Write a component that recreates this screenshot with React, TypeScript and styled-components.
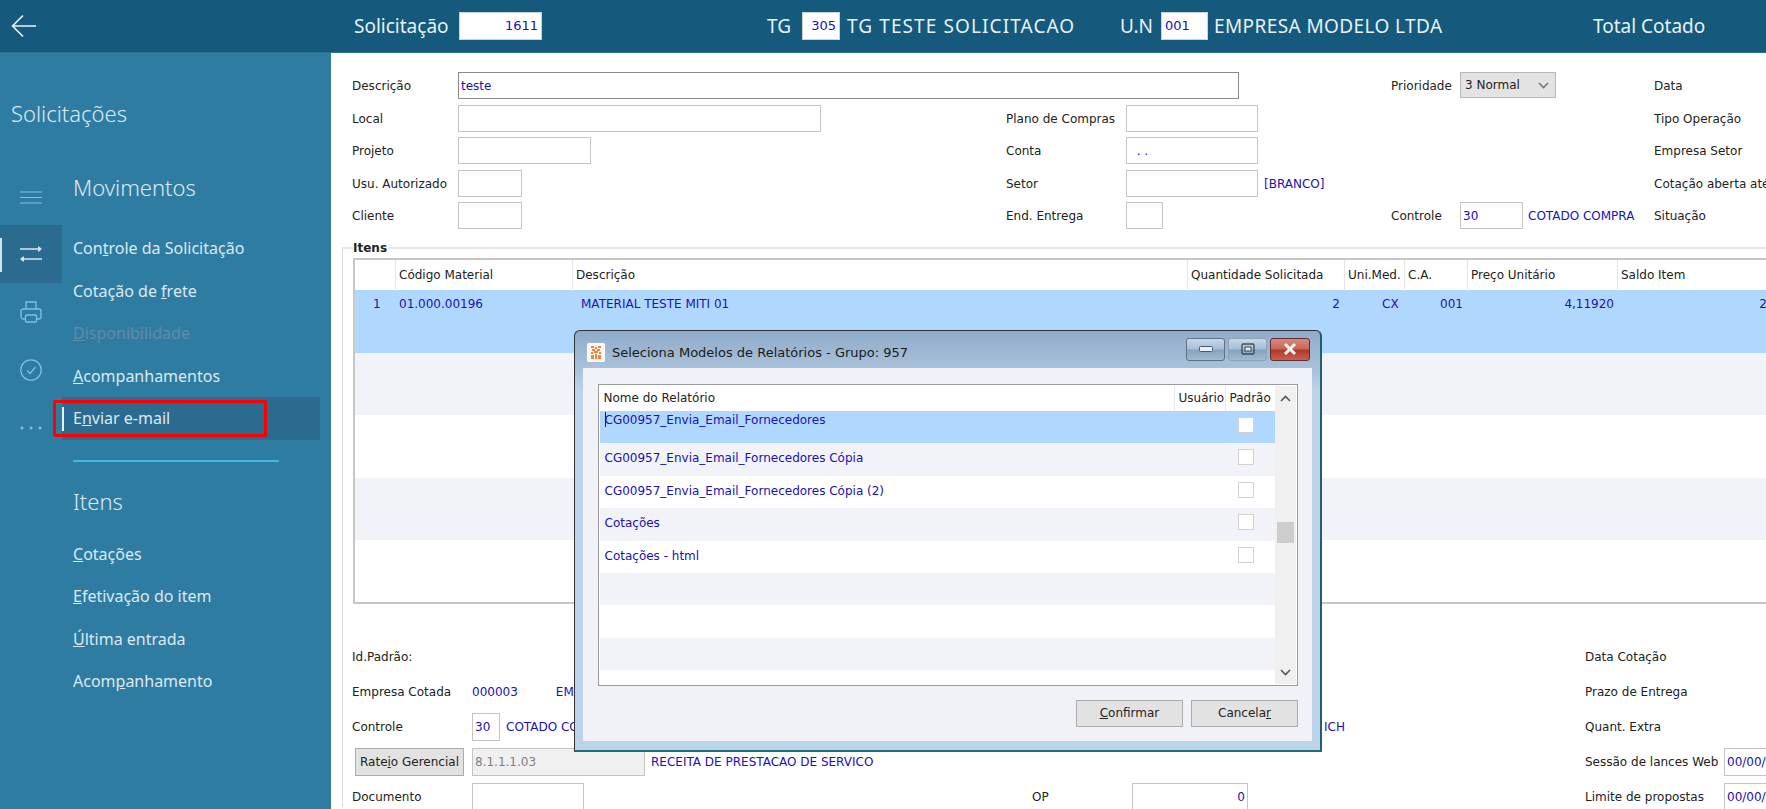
import React from "react";
import styled, { createGlobalStyle, css } from "styled-components";

const Global = createGlobalStyle`
  html, body { margin: 0; padding: 0; background: #fff; }
  #root { width: 1766px; height: 809px; overflow: hidden; }
  * { box-sizing: border-box; }
`;

const WIN = `"DejaVu Sans", "Liberation Sans", sans-serif`;
const UI = `"Noto Sans", "Open Sans", sans-serif`;
const BLUE = "#2010b4";
const TEXT = "#222";

const Page = styled.div`
  width: 1766px;
  height: 809px;
  position: relative;
  overflow: hidden;
  font-family: ${WIN};
  font-size: 12px;
  color: ${TEXT};
`;

const Header = styled.header`
  height: 53px;
  background: #155a7c;
  border-bottom: 1px solid #2c7396;
  display: flex;
  align-items: center;
  color: #e8f1f5;
  font-family: ${UI};
  font-size: 19px;
  white-space: nowrap;
`;
const BackCell = styled.div`
  width: 354px;
  padding-left: 11px;
  display: flex;
  align-items: center;
`;
const HeadSlot = styled.div<{ $w: number; $ls?: number }>`
  width: ${(p) => p.$w}px;
  flex: none;
  display: flex;
  align-items: center;
  letter-spacing: ${(p) => p.$ls ?? 0}px;
`;
const HeadInput = styled.div<{ $w: number; $right?: boolean }>`
  width: ${(p) => p.$w}px;
  height: 28px;
  background: #fff;
  border: 1px solid #c8d4da;
  color: ${BLUE};
  font-family: ${WIN};
  font-size: 13px;
  line-height: 26px;
  padding: 0 3px;
  text-align: ${(p) => (p.$right ? "right" : "left")};
`;

const Body = styled.div`
  display: grid;
  grid-template-columns: 331px 1fr;
  height: 756px;
`;

const Sidebar = styled.aside`
  background: #2f7ca3;
  color: #dce9f0;
  font-family: ${UI};
  position: relative;
`;
const SideTitle = styled.div`
  font-size: 22px;
  font-weight: 300;
  line-height: 30px;
  padding: 45px 0 0 11px;
  height: 117px;
`;
const SideColumns = styled.div`
  display: grid;
  grid-template-columns: 62px 1fr;
`;
const Rail = styled.nav`
  display: flex;
  flex-direction: column;
`;
const RailItem = styled.div<{ $h?: number; $active?: boolean }>`
  height: ${(p) => p.$h ?? 58}px;
  display: flex;
  align-items: center;
  justify-content: center;
  position: relative;
  color: #7cc0ea;
  ${(p) =>
    p.$active &&
    css`
      background: #2b6b8f;
      color: #e6f0f5;
      &::before {
        content: "";
        position: absolute;
        left: 0;
        top: 13px;
        width: 2px;
        height: 34px;
        background: #d5e2e9;
      }
    `}
`;
const Menu = styled.div``;
const MenuHeading = styled.div<{ $mt?: number; $mb?: number }>`
  font-size: 22px;
  font-weight: 300;
  line-height: 34px;
  height: 36px;
  padding-left: 11px;
  margin-top: ${(p) => p.$mt ?? 0}px;
  margin-bottom: ${(p) => p.$mb ?? 21}px;
`;
const MenuItem = styled.div<{ $active?: boolean; $disabled?: boolean }>`
  height: 42.5px;
  line-height: 42px;
  font-size: 16px;
  padding-left: 11px;
  width: 258px;
  position: relative;
  color: ${(p) => (p.$disabled ? "#5f8ca8" : "#dce9f0")};
  ${(p) =>
    p.$active &&
    css`
      background: #2b6b8f;
      &::before {
        content: "";
        position: absolute;
        left: 0;
        top: 10px;
        width: 2px;
        height: 24px;
        background: #e6f0f5;
      }
    `}
`;
const Divider = styled.div`
  height: 2px;
  width: 206px;
  margin: 20px 0 0 11px;
  background: #3db9e4;
`;
const RedFrame = styled.div`
  position: absolute;
  left: 53px;
  top: 347px;
  width: 214px;
  height: 37px;
  border: 3px solid #f00;
  border-radius: 2px;
`;

const Main = styled.main`
  position: relative;
  padding: 19px 0 0 21px;
  background: #fff;
  min-width: 0;
`;
const FormRow = styled.div`
  display: grid;
  grid-template-columns: 106px 548px 120px 265px 69px 194px 1fr;
  height: 32.5px;
  align-items: start;
  white-space: nowrap;
`;
const Label = styled.div`
  line-height: 28px;
  height: 27px;
`;
const Link = styled.span<{ $ml?: number }>`
  color: ${BLUE};
  line-height: 28px;
  margin-left: ${(p) => p.$ml ?? 0}px;
`;
const Inline = styled.div`
  display: flex;
  align-items: flex-start;
  white-space: nowrap;
`;
const Input = styled.div<{ $w: number; $dark?: boolean; $right?: boolean; $disabled?: boolean; $h?: number }>`
  width: ${(p) => p.$w}px;
  height: ${(p) => p.$h ?? 27}px;
  flex: none;
  background: ${(p) => (p.$disabled ? "#f0f0f0" : "#fff")};
  border: 1px solid ${(p) => (p.$dark ? "#8a8a8a" : "#c4c4c4")};
  color: ${(p) => (p.$disabled ? "#808080" : BLUE)};
  line-height: 26px;
  padding: 0 2px;
  white-space: nowrap;
  overflow: hidden;
  text-align: ${(p) => (p.$right ? "right" : "left")};
`;
const WideInput = styled(Input)`
  grid-column: span 3;
`;
const Select = styled.div`
  width: 96px;
  height: 26px;
  background: #e3e3e3;
  border: 1px solid #b8b8b8;
  line-height: 24px;
  padding-left: 4px;
  display: flex;
  justify-content: space-between;
  align-items: center;
`;
const SelectArrow = styled.span`
  margin-right: 6px;
  display: flex;
`;

const GroupBox = styled.section`
  position: relative;
  margin: 12.5px 0 0 -10px;
  border-top: 2px solid #e8e8e8;
  border-left: 1px solid #dcdcdc;
  padding: 9px 0 0 10px;
  height: 560px;
`;
const Legend = styled.div`
  position: absolute;
  left: 10px;
  top: -9px;
  background: #fff;
  padding-right: 2px;
  font-weight: 700;
  line-height: 16px;
`;
const Table = styled.div`
  width: 1500px;
  height: 346px;
  border: 2px solid #c6c6c6;
  border-right: none;
  overflow: hidden;
`;
const COLS = "41px 177px 615px 157px 60px 63px 150px 149px";
const HeadRow = styled.div`
  display: grid;
  grid-template-columns: ${COLS};
  height: 30px;
  background: #fff;
`;
const HeadCell = styled.div`
  border-right: 1px solid #e4e4e4;
  line-height: 31px;
  padding-left: 3px;
  white-space: nowrap;
`;
const DataRow = styled.div<{ $tone: "sel" | "alt" | "plain" }>`
  display: grid;
  grid-template-columns: ${COLS};
  height: 62.5px;
  background: ${(p) => (p.$tone === "sel" ? "#b0d8ff" : p.$tone === "alt" ? "#f2f3f8" : "#fff")};
  color: ${BLUE};
`;
const DataCell = styled.div<{ $right?: boolean; $pl?: number; $pr?: number }>`
  line-height: 29px;
  text-align: ${(p) => (p.$right ? "right" : "left")};
  padding-left: ${(p) => p.$pl ?? 0}px;
  padding-right: ${(p) => p.$pr ?? 0}px;
  white-space: nowrap;
`;
const BottomRow = styled.div<{ $mt?: number }>`
  display: grid;
  grid-template-columns: 120px 560px 100px 453px 139px 1fr;
  height: 35px;
  align-items: center;
  white-space: nowrap;
  margin: ${(p) => p.$mt ?? 0}px 0 0 -1px;
`;
const Button = styled.div<{ $w: number; $h?: number }>`
  width: ${(p) => p.$w}px;
  height: ${(p) => p.$h ?? 27}px;
  flex: none;
  background: #e2e2e2;
  border: 1px solid #acacac;
  text-align: center;
  line-height: ${(p) => (p.$h ?? 27) - 2}px;
  color: #222;
`;
const RateioButton = styled(Button)`
  margin-left: 3px;
`;
const Clip = styled.span<{ $w: number; $ml: number }>`
  display: inline-block;
  width: ${(p) => p.$w}px;
  margin-left: ${(p) => p.$ml}px;
  overflow: hidden;
  color: ${BLUE};
  line-height: 28px;
  white-space: nowrap;
`;

const Dialog = styled.div`
  position: absolute;
  left: 574px;
  top: 330px;
  width: 748px;
  height: 422px;
  border: 1px solid #2e3338;
  border-bottom: 2px solid #1f6f7f;
  border-right: 2px solid #1f5f6f;
  border-radius: 6px 6px 0 0;
  background: linear-gradient(#90abc9 0, #aac3dd 40px, #bcd4ea 60px, #bcd4ea 100%);
  display: flex;
  flex-direction: column;
  padding: 0 8px 9px;
`;
const TitleBar = styled.div`
  height: 38px;
  display: flex;
  align-items: center;
  font-size: 13px;
  color: #1a1a1a;
  padding: 6px 0 0 4px;
`;
const TitleText = styled.div`
  margin-left: 7px;
  flex: 1;
`;
const WinButton = styled.div<{ $kind: "min" | "max" | "close" }>`
  width: ${(p) => (p.$kind === "close" ? 40 : 39)}px;
  height: 23px;
  margin-left: ${(p) => (p.$kind === "min" ? 0 : 3)}px;
  margin-right: ${(p) => (p.$kind === "close" ? 2 : 0)}px;
  margin-top: -7px;
  border-radius: 3px;
  border: 1px solid ${(p) => (p.$kind === "close" ? "#5e2f35" : p.$kind === "min" ? "#5f7387" : "#8da3b8")};
  background: ${(p) =>
    p.$kind === "close"
      ? "linear-gradient(#d98a7c 0, #c9675a 45%, #b23a2b 55%, #c9614f 100%)"
      : "linear-gradient(#c6d8e9 0, #a9c0d8 45%, #86a3bf 55%, #9fbad3 100%)"};
  display: flex;
  align-items: center;
  justify-content: center;
`;
const Client = styled.div`
  flex: 1;
  background: #f1f2f8;
  padding: 16px 14px 14px 14.5px;
  display: flex;
  flex-direction: column;
`;
const List = styled.div`
  height: 302px;
  flex: none;
  border: 1px solid #9b9b9b;
  background: #fff;
  display: grid;
  grid-template-columns: 1fr 21px;
  padding: 1px;
  overflow: hidden;
`;
const LCOLS = "575px 51px 50px";
const ListPane = styled.div`
  min-width: 0;
  overflow: hidden;
`;
const ListHead = styled.div`
  display: grid;
  grid-template-columns: ${LCOLS};
  height: 25px;
  line-height: 25px;
`;
const ListHeadCell = styled.div<{ $last?: boolean }>`
  padding-left: 4px;
  border-right: 1px solid ${(p) => (p.$last ? "transparent" : "#e8e8e8")};
  white-space: nowrap;
`;
const ListRow = styled.div<{ $tone: "sel" | "alt" | "plain" }>`
  display: grid;
  grid-template-columns: 621px 50px;
  height: 32.4px;
  padding-top: 6px;
  background: ${(p) => (p.$tone === "sel" ? "#b0d8ff" : p.$tone === "alt" ? "#f2f3f8" : "#fff")};
  align-items: start;
  color: ${BLUE};
`;
const ListName = styled.div<{ $raised?: boolean }>`
  padding-left: 5px;
  position: relative;
  white-space: nowrap;
  line-height: 18px;
  ${(p) =>
    p.$raised &&
    css`
      margin-top: -6px;
      &::before {
        content: "";
        position: absolute;
        left: 5px;
        top: 1px;
        width: 1px;
        height: 15px;
        background: #222;
      }
    `}
`;
const CheckBox = styled.div`
  width: 16px;
  height: 16px;
  background: #fff;
  border: 1px solid #d2d2d2;
  justify-self: center;
`;
const ScrollBar = styled.div`
  background: #f0f0f0;
  position: relative;
  display: flex;
  flex-direction: column;
  align-items: center;
  justify-content: space-between;
  padding: 9px 0 8px;
`;
const ScrollThumb = styled.div`
  position: absolute;
  left: 2px;
  top: 136px;
  width: 17px;
  height: 21px;
  background: #cdcdcd;
`;
const DialogActions = styled.div`
  display: flex;
  justify-content: flex-end;
  gap: 8px;
  margin-top: 14px;
`;

const Back = () => (
  <svg width="26" height="24" viewBox="0 0 26 24" fill="none" stroke="#eef4f7" strokeWidth="1.6">
    <path d="M25 12H2M12 1.5 1.5 12 12 22.5" />
  </svg>
);
const Hamburger = () => (
  <svg width="22" height="13" viewBox="0 0 22 13" stroke="currentColor" strokeWidth="1.2">
    <path d="M0 1h22M0 6.5h22M0 12h22" />
  </svg>
);
const Transfer = () => (
  <svg width="22" height="18" viewBox="0 0 22 18" fill="currentColor" stroke="currentColor" strokeWidth="1.4">
    <path d="M0 4h19" />
    <path d="M18.5 1.5 21.5 4l-3 2.5z" strokeWidth="0.6" />
    <path d="M22 14H3" />
    <path d="M3.5 11.5.5 14l3 2.5z" strokeWidth="0.6" />
  </svg>
);
const Printer = () => (
  <svg width="22" height="22" viewBox="0 0 22 22" fill="none" stroke="currentColor" strokeWidth="1.3">
    <path d="M6 8V1h10v7M5 18H3a2 2 0 0 1-2-2v-6a2 2 0 0 1 2-2h16a2 2 0 0 1 2 2v6a2 2 0 0 1-2 2h-2" />
    <rect x="5.5" y="14" width="11" height="7" rx="1" />
  </svg>
);
const Check = () => (
  <svg width="22" height="22" viewBox="0 0 22 22" fill="none" stroke="currentColor" strokeWidth="1.2">
    <circle cx="11" cy="11" r="10.2" />
    <path d="M7 11.5l3 3 5.5-6.5" />
  </svg>
);
const Dots = () => (
  <svg width="22" height="4" viewBox="0 0 22 4" fill="currentColor">
    <circle cx="2" cy="2" r="1.5" />
    <circle cx="11" cy="2" r="1.5" />
    <circle cx="20" cy="2" r="1.5" />
  </svg>
);
const Chevron = ({ up, color = "#555" }: { up?: boolean; color?: string }) => (
  <svg width="11" height="7" viewBox="0 0 11 7" fill="none" stroke={color} strokeWidth="1.6">
    <path d={up ? "M1 6l4.5-4.5L10 6" : "M1 1l4.5 4.5L10 1"} />
  </svg>
);
const AppIcon = () => (
  <svg width="18" height="19" viewBox="0 0 18 19">
    <rect width="18" height="19" rx="1.5" fill="#fdf8f4" />
    <path
      d="M4 3h3v2H4zM8 4h2v2H8zM11 3h3v2h-3zM5 6h3v2H5zM10 6h3v2h-3zM7 8h4v2H7zM4 9h2v2H4zM12 9h2v2h-2zM4 12h3v4H4zM8 11h2v5H8zM11 12h3v4h-3z"
      fill="#f5813a"
    />
  </svg>
);

const menuTop = [
  <>Con<u>t</u>role da Solicitação</>,
  <>Cotação de <u>f</u>rete</>,
];
const menuBottom = [
  <><u>C</u>otações</>,
  <><u>E</u>fetivação do item</>,
  <><u>Ú</u>ltima entrada</>,
  <>Acom<u>p</u>anhamento</>,
];
const reports: { name: string; tone: "alt" | "plain" }[] = [
  { name: "CG00957_Envia_Email_Fornecedores Cópia", tone: "alt" },
  { name: "CG00957_Envia_Email_Fornecedores Cópia (2)", tone: "plain" },
  { name: "Cotações", tone: "alt" },
  { name: "Cotações - html", tone: "plain" },
];

export default function App() {
  return (
    <Page>
      <Global />
      <Header>
        <BackCell><Back /></BackCell>
        <HeadSlot $w={105}>Solicitação</HeadSlot>
        <HeadSlot $w={308}><HeadInput $w={83} $right>1611</HeadInput></HeadSlot>
        <HeadSlot $w={35}>TG</HeadSlot>
        <HeadSlot $w={45}><HeadInput $w={38} $right>305</HeadInput></HeadSlot>
        <HeadSlot $w={273} $ls={1.1}>TG TESTE SOLICITACAO</HeadSlot>
        <HeadSlot $w={41}>U.N</HeadSlot>
        <HeadSlot $w={53}><HeadInput $w={47}>001</HeadInput></HeadSlot>
        <HeadSlot $w={379} $ls={0.4}>EMPRESA MODELO LTDA</HeadSlot>
        <HeadSlot $w={130}>Total Cotado</HeadSlot>
      </Header>
      <Body>
        <Sidebar>
          <SideTitle>Solicitações</SideTitle>
          <SideColumns>
            <Rail>
              <RailItem $h={55}><Hamburger /></RailItem>
              <RailItem $active><Transfer /></RailItem>
              <RailItem><Printer /></RailItem>
              <RailItem><Check /></RailItem>
              <RailItem><Dots /></RailItem>
            </Rail>
            <Menu>
              <MenuHeading>Movimentos</MenuHeading>
              {menuTop.map((m, i) => <MenuItem key={i}>{m}</MenuItem>)}
              <MenuItem $disabled><u>D</u>isponibilidade</MenuItem>
              <MenuItem><u>A</u>companhamentos</MenuItem>
              <MenuItem $active>E<u>n</u>viar e-mail</MenuItem>
              <Divider />
              <MenuHeading $mt={22} $mb={13}>Itens</MenuHeading>
              {menuBottom.map((m, i) => <MenuItem key={i}>{m}</MenuItem>)}
            </Menu>
          </SideColumns>
          <RedFrame />
        </Sidebar>
        <Main>
          <FormRow>
            <Label>Descrição</Label>
            <WideInput $w={781} $dark>teste</WideInput>
            <Label>Prioridade</Label>
            <Select>3 Normal <SelectArrow><Chevron color="#777" /></SelectArrow></Select>
            <Label>Data</Label>
          </FormRow>
          <FormRow>
            <Label>Local</Label>
            <Input $w={363} />
            <Label>Plano de Compras</Label>
            <Input $w={132} />
            <span />
            <span />
            <Label>Tipo Operação</Label>
          </FormRow>
          <FormRow>
            <Label>Projeto</Label>
            <Input $w={133} />
            <Label>Conta</Label>
            <Input $w={132}>&nbsp; . .</Input>
            <span />
            <span />
            <Label>Empresa Setor</Label>
          </FormRow>
          <FormRow>
            <Label>Usu. Autorizado</Label>
            <Input $w={64} />
            <Label>Setor</Label>
            <Inline><Input $w={132} /><Link $ml={6}>[BRANCO]</Link></Inline>
            <span />
            <span />
            <Label>Cotação aberta até</Label>
          </FormRow>
          <FormRow>
            <Label>Cliente</Label>
            <Input $w={64} />
            <Label>End. Entrega</Label>
            <Input $w={37} />
            <Label>Controle</Label>
            <Inline><Input $w={63}>30</Input><Link $ml={5}>COTADO COMPRA</Link></Inline>
            <Label>Situação</Label>
          </FormRow>
          <GroupBox>
            <Legend>Itens</Legend>
            <Table>
              <HeadRow>
                <HeadCell />
                <HeadCell>Código Material</HeadCell>
                <HeadCell>Descrição</HeadCell>
                <HeadCell>Quantidade Solicitada</HeadCell>
                <HeadCell>Uni.Med.</HeadCell>
                <HeadCell>C.A.</HeadCell>
                <HeadCell>Preço Unitário</HeadCell>
                <HeadCell>Saldo Item</HeadCell>
              </HeadRow>
              <DataRow $tone="sel">
                <DataCell $pl={18}>1</DataCell>
                <DataCell $pl={3}>01.000.00196</DataCell>
                <DataCell $pl={8}>MATERIAL TESTE MITI 01</DataCell>
                <DataCell $right $pr={5}>2</DataCell>
                <DataCell $pl={37}>CX</DataCell>
                <DataCell $right $pr={5}>001</DataCell>
                <DataCell $right $pr={4}>4,11920</DataCell>
                <DataCell $right $pr={-2}>2</DataCell>
              </DataRow>
              <DataRow $tone="alt" />
              <DataRow $tone="plain" />
              <DataRow $tone="alt" />
              <DataRow $tone="plain" />
            </Table>
            <BottomRow $mt={35}>
              <Label>Id.Padrão:</Label>
              <span /><span /><span />
              <Label>Data Cotação</Label>
            </BottomRow>
            <BottomRow>
              <Label>Empresa Cotada</Label>
              <Inline><Link>000003</Link><Clip $w={90} $ml={38}>EMPRESA MODELO</Clip></Inline>
              <span /><span />
              <Label>Prazo de Entrega</Label>
            </BottomRow>
            <BottomRow>
              <Label>Controle</Label>
              <Inline><Input $w={28} $h={28}>30</Input><Link $ml={6}>COTADO COMPRA</Link></Inline>
              <span />
              <Clip $w={30} $ml={192}>ICH</Clip>
              <Label>Quant. Extra</Label>
            </BottomRow>
            <BottomRow>
              <RateioButton $w={109} $h={28}>Rate<u>i</u>o Gerencial</RateioButton>
              <Inline>
                <Input $w={173} $h={28} $disabled>8.1.1.1.03</Input>
                <Clip $w={224} $ml={6}>RECEITA DE PRESTACAO DE SERVICO</Clip>
              </Inline>
              <span /><span />
              <Label>Sessão de lances Web</Label>
              <Input $w={60} $h={28}>00/00/</Input>
            </BottomRow>
            <BottomRow>
              <Label>Documento</Label>
              <Inline><Input $w={112} $h={28} /></Inline>
              <Label>OP</Label>
              <Input $w={116} $h={28} $right>0</Input>
              <Label>Limite de propostas</Label>
              <Input $w={60} $h={28}>00/00/</Input>
            </BottomRow>
          </GroupBox>
        </Main>
      </Body>
      <Dialog>
        <TitleBar>
          <AppIcon />
          <TitleText>Seleciona Modelos de Relatórios - Grupo: 957</TitleText>
          <WinButton $kind="min">
            <svg width="14" height="6"><rect x="0.5" y="0.5" width="13" height="5" rx="1" fill="#e8eef4" stroke="#4a5a6a" /></svg>
          </WinButton>
          <WinButton $kind="max">
            <svg width="14" height="12"><rect x="1" y="1" width="12" height="10" rx="1" fill="none" stroke="#3f4f5f" strokeWidth="1.4" /><rect x="4" y="4" width="6" height="4" fill="#dfe7ef" stroke="#3f4f5f" /></svg>
          </WinButton>
          <WinButton $kind="close">
            <svg width="14" height="12" fill="none" stroke="#f4f0ee" strokeWidth="3"><path d="M2 1l10 10M12 1L2 11" /></svg>
          </WinButton>
        </TitleBar>
        <Client>
          <List>
            <ListPane>
              <ListHead>
                <ListHeadCell>Nome do Relatório</ListHeadCell>
                <ListHeadCell>Usuário</ListHeadCell>
                <ListHeadCell $last>Padrão</ListHeadCell>
              </ListHead>
              <ListRow $tone="sel">
                <ListName $raised>CG00957_Envia_Email_Fornecedores</ListName>
                <CheckBox />
              </ListRow>
              {reports.map((r) => (
                <ListRow key={r.name} $tone={r.tone}>
                  <ListName>{r.name}</ListName>
                  <CheckBox />
                </ListRow>
              ))}
              <ListRow $tone="alt" />
              <ListRow $tone="plain" />
              <ListRow $tone="alt" />
              <ListRow $tone="plain" />
            </ListPane>
            <ScrollBar>
              <Chevron up />
              <ScrollThumb />
              <Chevron />
            </ScrollBar>
          </List>
          <DialogActions>
            <Button $w={107}><u>C</u>onfirmar</Button>
            <Button $w={107}>Cancela<u>r</u></Button>
          </DialogActions>
        </Client>
      </Dialog>
    </Page>
  );
}
